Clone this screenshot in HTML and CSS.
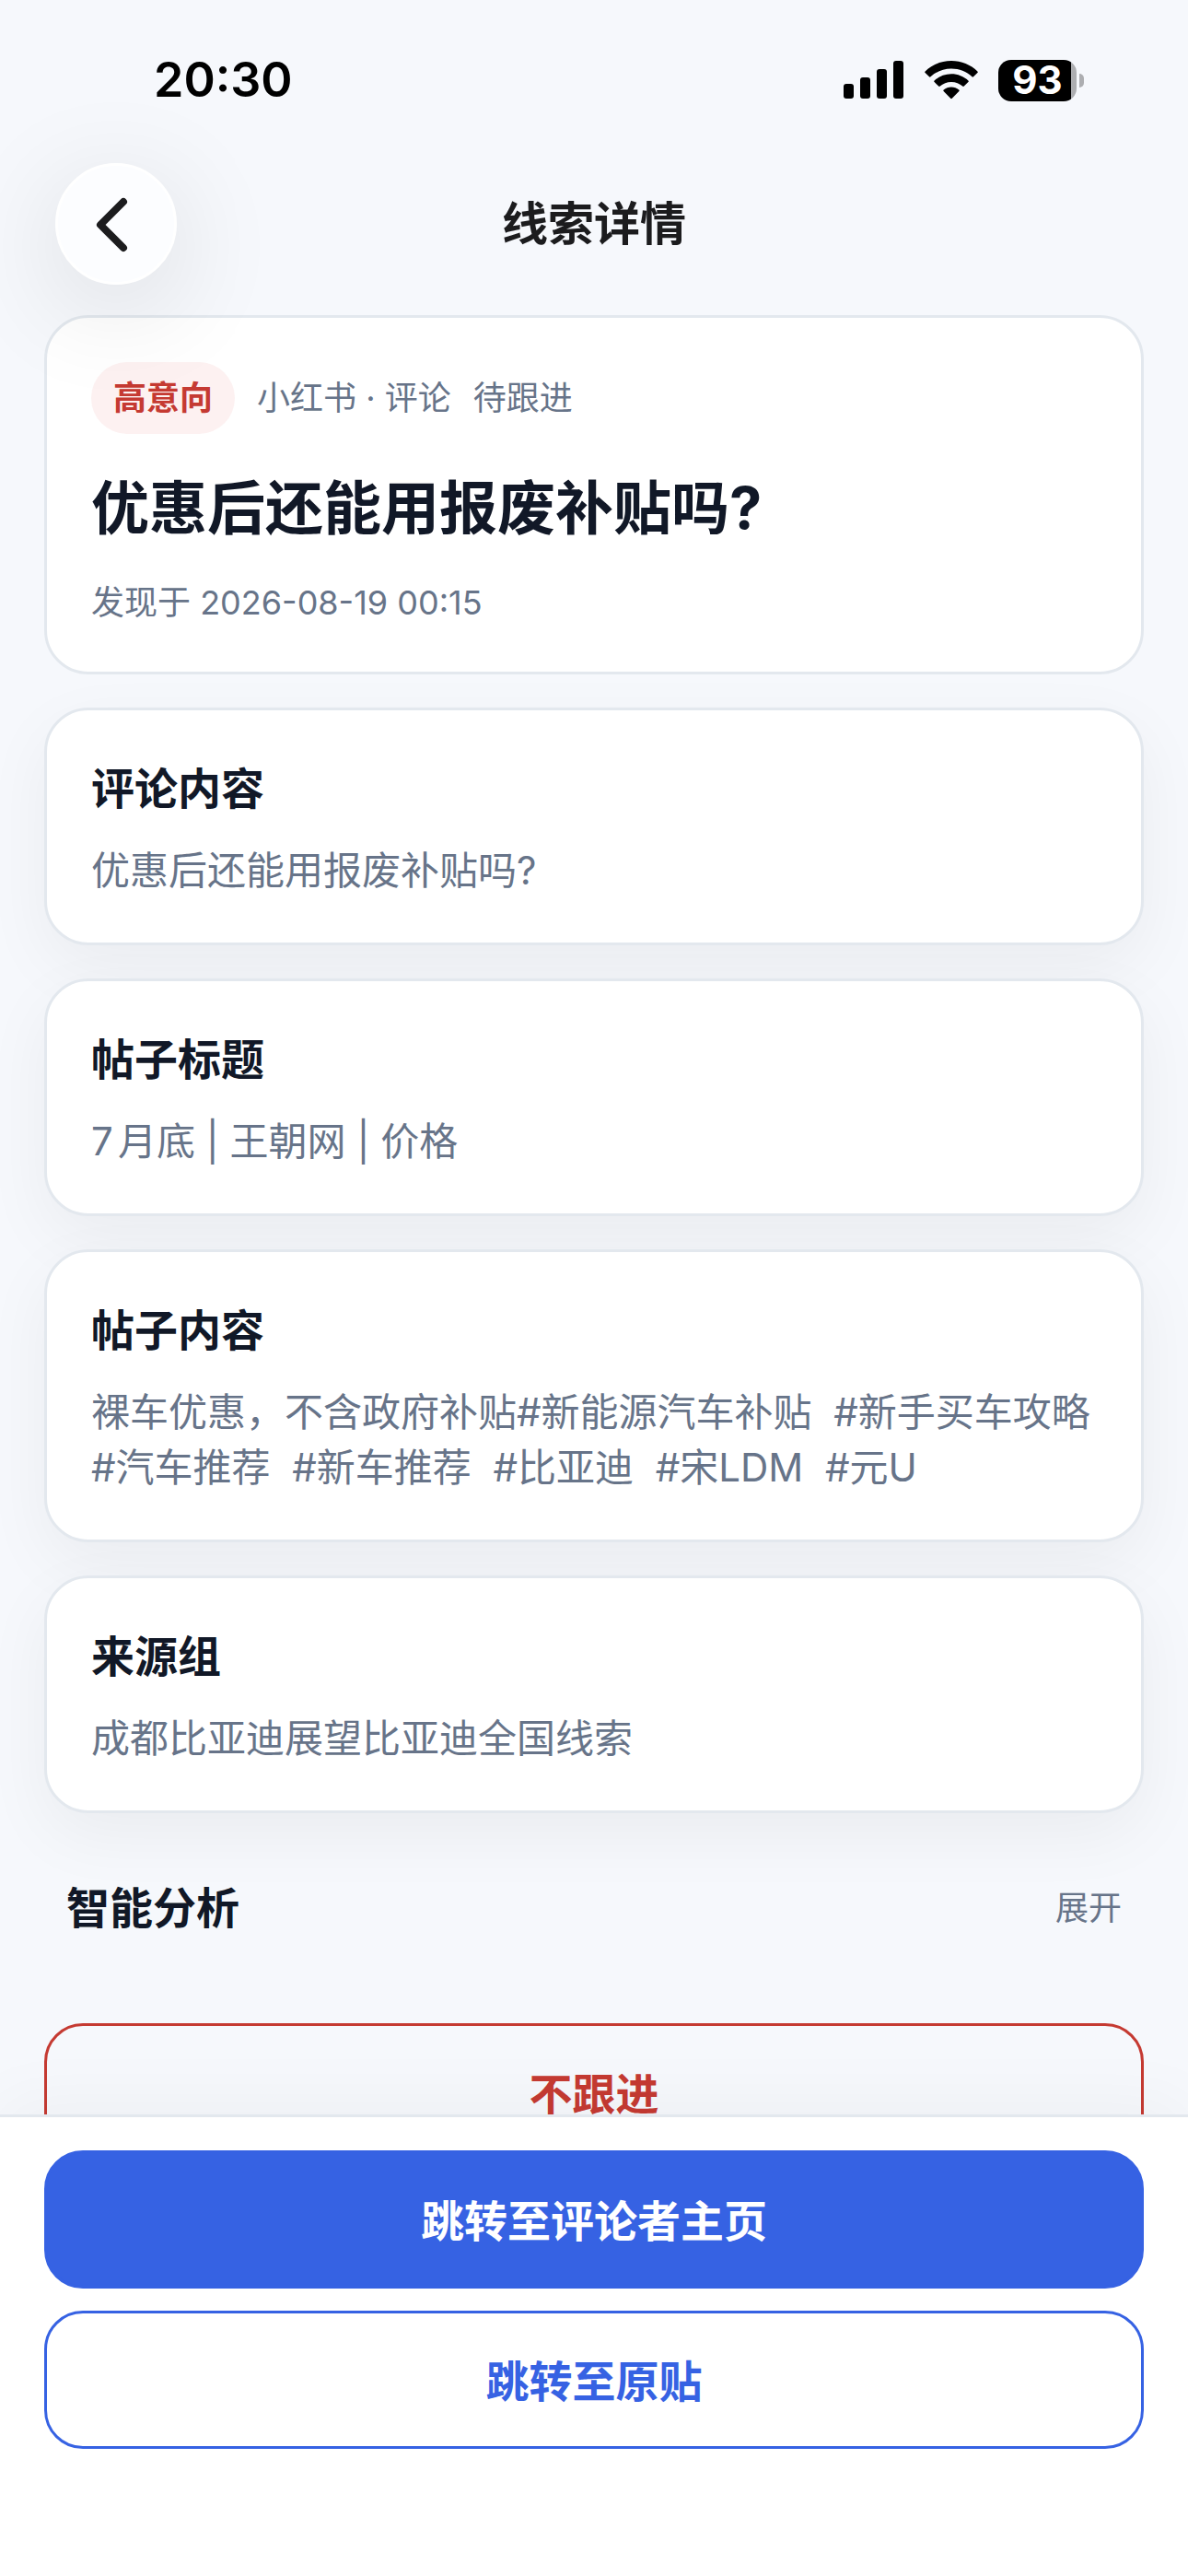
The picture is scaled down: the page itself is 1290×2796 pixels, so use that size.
FILE: index.html
```html
<!DOCTYPE html>
<html lang="zh-CN">
<head>
  <meta charset="UTF-8" />
  <meta name="viewport" content="width=device-width, initial-scale=1" />
  <title>线索详情</title>
  <link rel="stylesheet" href="styles.css">
</head>
<body>
  <div class="status-bar">
    <span class="time">20:30</span>
    <div class="status-icons">
      <svg width="66" height="42" viewBox="0 0 66 42">
        <rect x="0" y="25" width="11" height="16" rx="3" />
        <rect x="18" y="18" width="11" height="23" rx="3" />
        <rect x="36" y="9" width="11" height="32" rx="3" />
        <rect x="54" y="0" width="11" height="41" rx="3" />
      </svg>
      <svg width="58" height="42" viewBox="0 0 58 42">
        <path d="M29 0C18 0 8 4.300 0.600 11.400Q-0.200 12.200 0.600 13L5 17.300Q5.700 18 6.500 17.300C12.500 11.800 20.400 8.600 29 8.600S45.500 11.800 51.500 17.300Q52.300 18 53 17.300L57.400 13Q58.200 12.200 57.400 11.400C50 4.300 40 0 29 0Z" />
        <path d="M29 14.300C22 14.300 15.500 17 10.600 21.500Q9.800 22.300 10.600 23.100L15.200 27.600Q16 28.300 16.800 27.600C20 24.700 24.300 23 29 23S38 24.700 41.200 27.600Q42 28.300 42.800 27.600L47.400 23.100Q48.200 22.300 47.400 21.500C42.500 17 36 14.300 29 14.300Z" />
        <path d="M29 28.500C25.900 28.500 23 29.600 20.700 31.500Q19.800 32.300 20.600 33.100L28.200 40.800Q29 41.500 29.800 40.800L37.400 33.100Q38.200 32.300 37.300 31.500C35 29.600 32.100 28.500 29 28.500Z" />
      </svg>
      <div class="battery"><span class="battery-body">93</span><span class="battery-tip"></span></div>
    </div>
  </div>

  <header class="nav">
    <button class="back" aria-label="返回">
      <svg width="132" height="132" viewBox="0 0 132 132">
        <path d="M74 42L49 67L74 92" fill="none" stroke="#1c1c1e" stroke-width="8" stroke-linecap="round" stroke-linejoin="round" />
      </svg>
    </button>
    <h1 class="nav-title">线索详情</h1>
  </header>

  <main class="content">
    <section class="card summary">
      <div class="meta">
        <span class="tag">高意向</span>
        <span>小红书 · 评论</span>
        <span>待跟进</span>
      </div>
      <h2 class="summary-title">优惠后还能用报废补贴吗?</h2>
      <p class="found">发现于 2026-08-19 00:15</p>
    </section>

    <section class="card">
      <h3 class="heading">评论内容</h3>
      <p class="text">优惠后还能用报废补贴吗?</p>
    </section>

    <section class="card">
      <h3 class="heading">帖子标题</h3>
      <p class="text mixed">7月底 | 王朝网 | 价格</p>
    </section>

    <section class="card">
      <h3 class="heading">帖子内容</h3>
      <p class="text">裸车优惠，不含政府补贴#新能源汽车补贴  #新手买车攻略  #汽车推荐  #新车推荐  #比亚迪  #宋LDM  #元U</p>
    </section>

    <section class="card">
      <h3 class="heading">来源组</h3>
      <p class="text">成都比亚迪展望比亚迪全国线索</p>
    </section>

    <div class="analysis">
      <h3 class="heading">智能分析</h3>
      <button class="toggle">展开</button>
    </div>

    <button class="btn btn-danger">不跟进</button>
  </main>

  <footer class="actions">
    <button class="btn btn-primary">跳转至评论者主页</button>
    <button class="btn btn-outline">跳转至原贴</button>
  </footer>
</body>
</html>
```
FILE: styles.css
```css
* {
  box-sizing: border-box;
}

body {
  margin: 0;
  height: 100vh;
  display: flex;
  flex-direction: column;
  overflow: hidden;
  background: #f6f8fc;
  color: #111827;
  font-family: Inter, "Noto Sans CJK SC", sans-serif;
  text-autospace: no-autospace;
}

h1, h2, h3, p {
  margin: 0;
}

button {
  font-family: inherit;
  cursor: pointer;
}

/* status bar */
.status-bar {
  flex: none;
  display: flex;
  justify-content: space-between;
  align-items: center;
  height: 177px;
  padding: 0 113px 3px 167px;
  color: #000;
}

.time {
  font-size: 52px;
  line-height: 60px;
  font-weight: 600;
}

.status-icons {
  display: flex;
  align-items: center;
  gap: 22px;
}

.battery {
  display: flex;
  align-items: center;
  gap: 3px;
}

.battery-body {
  width: 85px;
  height: 45px;
  border-radius: 14px;
  background: linear-gradient(to right, #000 79px, #adaeb1 79px);
  color: #fff;
  font-size: 42px;
  line-height: 44px;
  font-weight: 700;
  text-align: center;
}

.battery-tip {
  width: 5px;
  height: 15px;
  border-radius: 0 5px 5px 0;
  background: #adaeb1;
}

/* navigation */
.nav {
  flex: none;
  display: grid;
  grid-template-columns: 132px 1fr 132px;
  align-items: center;
  padding: 0 60px 33px;
}

.back {
  position: relative;
  z-index: 1;
  width: 132px;
  height: 132px;
  padding: 0;
  border: 3px solid #fff;
  border-radius: 50%;
  background: #fcfdff;
  box-shadow: 0 24px 120px rgba(0, 0, 0, 0.12);
}

.back svg {
  display: block;
  margin: -3px;
}

.nav-title {
  font-size: 50px;
  line-height: 72px;
  font-weight: 600;
  text-align: center;
  color: #1c1c1e;
}

/* cards */
.content {
  flex: 1;
  min-height: 0;
  display: flex;
  flex-direction: column;
  gap: 36px;
  padding: 0 48px;
}

.card {
  padding: 48px;
  border: 3px solid #e3e8ee;
  border-radius: 48px;
  background: #fff;
  box-shadow: 0 24px 72px rgba(0, 0, 0, 0.05);
}

.summary {
  box-shadow: none;
}

.meta {
  display: flex;
  align-items: center;
  gap: 24px;
  font-size: 36px;
  line-height: 54px;
  color: #677489;
}

.tag {
  padding: 12px 24px;
  border-radius: 39px;
  background: #fdf1f1;
  color: #c53a32;
  font-weight: 700;
}

.summary-title {
  margin: 38px 0 34px;
  font-size: 63px;
  line-height: 84px;
  font-weight: 700;
}

.found {
  font-size: 36px;
  line-height: 54px;
  color: #677489;
}

.heading {
  font-size: 47px;
  line-height: 74px;
  font-weight: 700;
}

.text {
  margin-top: 22px;
  font-size: 42px;
  line-height: 60px;
  color: #677489;
  white-space: pre-wrap;
}

.mixed {
  text-autospace: normal;
}

.analysis {
  display: flex;
  justify-content: space-between;
  align-items: center;
  padding: 30px 24px 28px;
}

.toggle {
  padding: 0;
  border: none;
  background: none;
  font-size: 36px;
  line-height: 54px;
  color: #677489;
}

/* buttons */
.btn {
  flex: none;
  width: 100%;
  height: 150px;
  padding: 0 0 3px;
  border: 3px solid transparent;
  border-radius: 42px;
  background: none;
  font-size: 47px;
  font-weight: 700;
}

.btn-danger {
  margin-top: 24px;
  border-color: #c53a32;
  color: #c53a32;
}

.btn-primary {
  border-color: #3662e3;
  background: #3662e3;
  color: #fff;
}

.btn-outline {
  border-color: #3662e3;
  color: #3662e3;
}

.actions {
  flex: none;
  position: relative;
  display: flex;
  flex-direction: column;
  gap: 24px;
  padding: 36px 48px 138px;
  border-top: 3px solid #e3e8ee;
  background: #fff;
  box-shadow: 0 -12px 72px rgba(0, 0, 0, 0.04);
}
```
